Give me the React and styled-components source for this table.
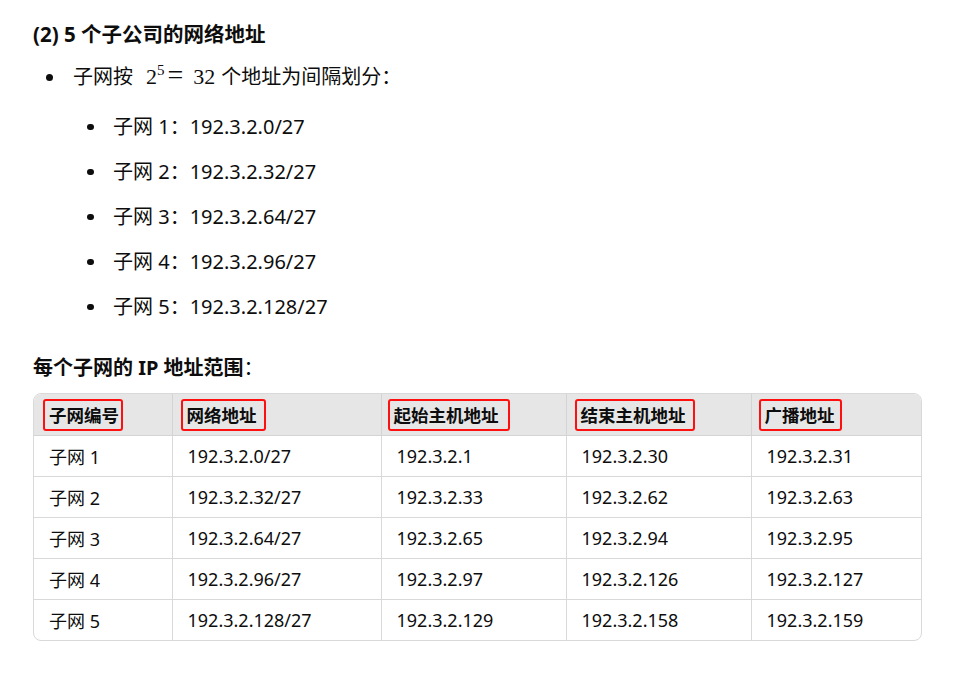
import React from "react"
import styled, { createGlobalStyle } from "styled-components"

const GlobalStyle = createGlobalStyle`
  body {
    margin: 0;
    background: #fff;
    color: #0d0d0d;
    font-family: "Noto Sans", "Noto Sans CJK SC", sans-serif;
  }
`

const subnets = [
  ["子网 1", "192.3.2.0/27", "192.3.2.1", "192.3.2.30", "192.3.2.31"],
  ["子网 2", "192.3.2.32/27", "192.3.2.33", "192.3.2.62", "192.3.2.63"],
  ["子网 3", "192.3.2.64/27", "192.3.2.65", "192.3.2.94", "192.3.2.95"],
  ["子网 4", "192.3.2.96/27", "192.3.2.97", "192.3.2.126", "192.3.2.127"],
  ["子网 5", "192.3.2.128/27", "192.3.2.129", "192.3.2.158", "192.3.2.159"],
]

// hand-drawn red boxes, each one a little different
const headers = [
  { label: "子网编号", inset: 9, pl: 4, pr: 2 },
  { label: "网络地址", inset: 8, pl: 4, pr: 7 },
  { label: "起始主机地址", inset: 6, pl: 4, pr: 9 },
  { label: "结束主机地址", inset: 8, pl: 4, pr: 7 },
  { label: "广播地址", inset: 7, pl: 4, pr: 5 },
]
const colWidths = [138, 209, 185, 185, 172]

const App = () => {
  return (
    <Page>
      <GlobalStyle />
      <Heading>(2) 5 个子公司的网络地址</Heading>
      <List>
        <Item $dot={7} $left={-27}>
          子网按<Math>2<sup>5</sup><Op>=</Op>32</Math>个地址为间隔划分：
          <SubList>
            {subnets.map((s, i) => (
              <SubItem key={i} $dot={6.5} $left={-26}>
                子网 {i + 1}：{s[1]}
              </SubItem>
            ))}
          </SubList>
        </Item>
      </List>
      <Caption>
        <b>每个子网的 IP 地址范围</b>：
      </Caption>
      <TableWrap>
        <Table>
          <colgroup>
            {colWidths.map((w, i) => (
              <col key={i} style={{ width: w }} />
            ))}
          </colgroup>
          <thead>
            <tr>
              {headers.map((h) => (
                <Th key={h.label} $inset={h.inset}>
                  <Marked $pl={h.pl} $pr={h.pr}>{h.label}</Marked>
                </Th>
              ))}
            </tr>
          </thead>
          <tbody>
            {subnets.map((row, i) => (
              <tr key={i}>
                {row.map((c, j) => (
                  <Td key={j} $last={i === subnets.length - 1}>
                    {c}
                  </Td>
                ))}
              </tr>
            ))}
          </tbody>
        </Table>
      </TableWrap>
    </Page>
  )
}

export default App

const Page = styled.div`
  padding: 20px 37px 30px 33px;
  width: 889px;
`

const Heading = styled.h3`
  margin: 0;
  font-size: 20.5px;
  font-weight: 700;
  line-height: 28px;
`

const List = styled.ul`
  margin: 14px 0 0;
  padding-left: 40px;
  list-style: none;
  font-size: 20px;
  line-height: 30px;
`

const Item = styled.li`
  position: relative;

  &::before {
    content: "";
    position: absolute;
    left: ${(p) => p.$left}px;
    top: ${(p) => 15 - p.$dot / 2}px;
    width: ${(p) => p.$dot}px;
    height: ${(p) => p.$dot}px;
    border-radius: 50%;
    background: #0d0d0d;
  }
`

const Math = styled.span`
  font-family: "Liberation Serif", "DejaVu Serif", serif;
  font-size: 22px;
  margin: 0 6px 0 13px;

  sup {
    font-size: 15px;
    vertical-align: 9px;
    line-height: 0;
  }
`

const Op = styled.span`
  font-size: 28px;
  line-height: 0;
  margin: 0 10px 0 3px;
`

const SubList = styled.ul`
  margin: 13px 0 0;
  padding-left: 40px;
  list-style: none;
`

const SubItem = styled(Item)`
  line-height: 30px;
  padding: 7px 0 8px;

  &::before {
    top: ${(p) => 22 - p.$dot / 2}px;
  }
`

const Caption = styled.p`
  margin: 24px 0 0;
  font-size: 20px;
  line-height: 27px;
  font-weight: 400;
`

const TableWrap = styled.div`
  margin-top: 12px;
  border: 1px solid #d9d9d9;
  border-radius: 8px;
  overflow: hidden;
`

const Table = styled.table`
  width: 100%;
  border-collapse: collapse;
  table-layout: fixed;
  font-size: 18px;
`

const Th = styled.th`
  background: #e6e6e6;
  text-align: left;
  font-weight: 700;
  font-size: 17.5px;
  height: 41px;
  padding: 0 0 0 ${(p) => p.$inset}px;
  border-left: 1px solid #d4d4d4;
  border-bottom: 1px solid #d4d4d4;

  &:first-child {
    border-left: none;
  }
`

const Marked = styled.span`
  display: inline-block;
  border: 2px solid #ff1010;
  border-radius: 3px;
  padding: 1px ${(p) => p.$pr}px 1px ${(p) => p.$pl}px;
  line-height: 26px;
`

const Td = styled.td`
  height: 40px;
  padding: 0 15px;
  border-left: 1px solid #d9d9d9;
  border-bottom: ${(p) => (p.$last ? "none" : "1px solid #d9d9d9")};

  &:first-child {
    border-left: none;
  }
`
